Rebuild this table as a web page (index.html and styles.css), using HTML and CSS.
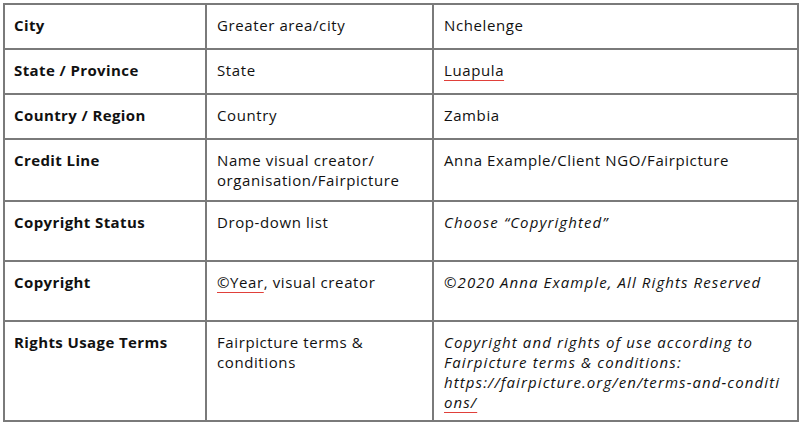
FILE: index.html
```html
<!DOCTYPE html>
<html>
<head>
<meta charset="utf-8">
<link rel="stylesheet" href="styles.css">
</head>
<body>
<table class="meta">
  <colgroup>
    <col class="c1"><col class="c2"><col class="c3">
  </colgroup>
  <tr class="r45"><th>City</th><td>Greater area/city</td><td>Nchelenge</td></tr>
  <tr class="r45"><th>State / Province</th><td>State</td><td><span class="spell">Luapula</span></td></tr>
  <tr class="r45"><th>Country / Region</th><td>Country</td><td>Zambia</td></tr>
  <tr class="r62"><th>Credit Line</th><td>Name visual creator/<br>organisation/Fairpicture</td><td>Anna Example/Client NGO/Fairpicture</td></tr>
  <tr class="r60"><th>Copyright Status</th><td>Drop-down list</td><td><em>Choose “Copyrighted”</em></td></tr>
  <tr class="r60"><th>Copyright</th><td><span class="spell">©Year</span>, visual creator</td><td><em>©2020 Anna Example, All Rights Reserved</em></td></tr>
  <tr class="r100"><th>Rights Usage Terms</th><td>Fairpicture terms &amp;<br>conditions</td><td><em>Copyright and rights of use according to<br>Fairpicture terms &amp; conditions:<br>https://fairpicture.org/en/terms-and-conditi<br><span class="spell">ons/</span></em></td></tr>
</table>
</body>
</html>
```
FILE: styles.css
```css
html, body {
  margin: 0;
  background: #ffffff;
}
body {
  padding: 3px 3px 0 3px;
  font-family: "Open Sans", "Liberation Sans", sans-serif;
  font-size: 15px;
  line-height: 20px;
  color: #111111;
}
.meta {
  border-collapse: collapse;
  table-layout: fixed;
  width: 794px;
}
.c1 { width: 202px; }
.c2 { width: 227px; }
.c3 { width: 365px; }
.meta th, .meta td {
  border: 2px solid #7a7a7a;
  padding: 10px 8px 0 10px;
  vertical-align: top;
  text-align: left;
  font-weight: 400;
  letter-spacing: 0.6px;
  white-space: nowrap;
}
.meta th {
  font-weight: 700;
  letter-spacing: 0.4px;
  padding-left: 9px;
}
.meta em {
  font-style: italic;
  letter-spacing: 1.1px;
}
.r45 { height: 45px; }
.r62 { height: 62px; }
.r60 { height: 60px; }
.r100 { height: 100px; }
.spell {
  text-decoration: underline;
  text-decoration-color: #e0403a;
  text-decoration-thickness: 1px;
  text-underline-offset: 4px;
}
```
